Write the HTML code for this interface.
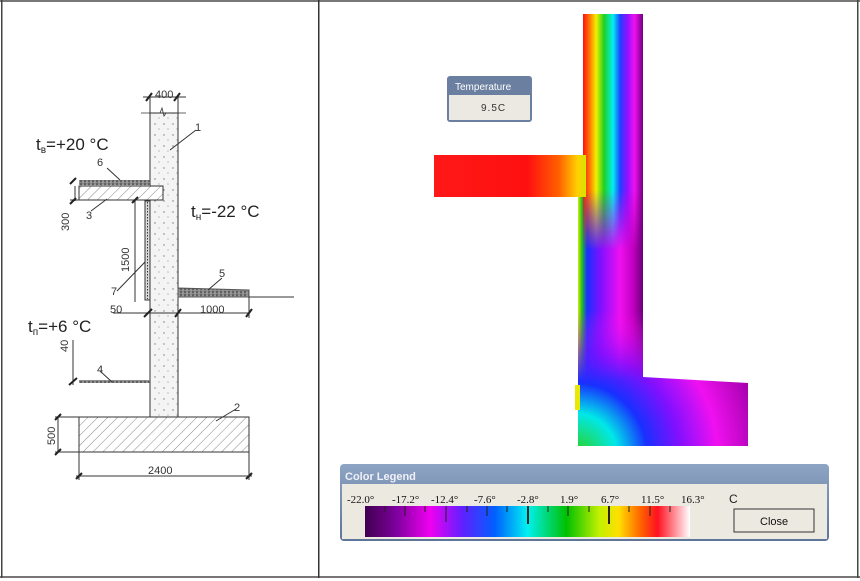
<!DOCTYPE html>
<html><head><meta charset="utf-8"><style>
html,body{margin:0;padding:0;background:#fff;}
body{width:860px;height:581px;position:relative;overflow:hidden;font-family:"Liberation Sans",sans-serif;}
</style></head><body>
<svg width="860" height="581" viewBox="0 0 860 581" xmlns="http://www.w3.org/2000/svg" style="position:absolute;left:0;top:0">
<defs>
<pattern id="hatch" width="7" height="7" patternUnits="userSpaceOnUse" patternTransform="rotate(45)">
<rect width="7" height="7" fill="#fff"/><line x1="0" y1="0" x2="0" y2="7" stroke="#888" stroke-width="1"/></pattern>
<pattern id="dots" width="9" height="11" patternUnits="userSpaceOnUse">
<rect width="9" height="11" fill="#f4f4f4"/><circle cx="2" cy="3" r="0.7" fill="#777"/><circle cx="6" cy="8" r="0.6" fill="#999"/></pattern>
<pattern id="grit" width="4" height="3" patternUnits="userSpaceOnUse">
<rect width="4" height="3" fill="#888"/><circle cx="1" cy="1" r="0.8" fill="#333"/><circle cx="3" cy="2" r="0.6" fill="#bbb"/></pattern>
<linearGradient id="gUp" x1="583" x2="643" y1="0" y2="0" gradientUnits="userSpaceOnUse">
<stop offset="0" stop-color="#ff1010"/><stop offset=".12" stop-color="#ff8000"/><stop offset=".22" stop-color="#f0f000"/><stop offset=".35" stop-color="#20d020"/><stop offset=".5" stop-color="#00f0f0"/><stop offset=".62" stop-color="#2040ff"/><stop offset=".74" stop-color="#9010ff"/><stop offset=".86" stop-color="#f010f0"/><stop offset="1" stop-color="#700080"/></linearGradient>
<linearGradient id="gLow" x1="578" x2="643" y1="0" y2="0" gradientUnits="userSpaceOnUse">
<stop offset="0" stop-color="#d0f000"/><stop offset=".06" stop-color="#20c020"/><stop offset=".14" stop-color="#1830ff"/><stop offset=".35" stop-color="#8010ff"/><stop offset=".65" stop-color="#f010f0"/><stop offset=".85" stop-color="#c000c0"/><stop offset="1" stop-color="#6a0078"/></linearGradient>
<linearGradient id="gSlab" x1="434" x2="590" y1="0" y2="0" gradientUnits="userSpaceOnUse">
<stop offset="0" stop-color="#ff1818"/><stop offset=".6" stop-color="#ff1010"/><stop offset=".8" stop-color="#ff6000"/><stop offset=".92" stop-color="#ffd000"/><stop offset="1" stop-color="#c0f000"/></linearGradient>
<linearGradient id="fadeDown" x1="0" x2="0" y1="190" y2="250" gradientUnits="userSpaceOnUse">
<stop offset="0" stop-color="#fff"/><stop offset="1" stop-color="#000"/></linearGradient>
<mask id="mUp"><rect x="570" y="0" width="90" height="260" fill="url(#fadeDown)"/><rect x="570" y="0" width="90" height="190" fill="#fff"/></mask>
<linearGradient id="fadeUp" x1="0" x2="0" y1="310" y2="380" gradientUnits="userSpaceOnUse">
<stop offset="0" stop-color="#000"/><stop offset="1" stop-color="#fff"/></linearGradient>
<mask id="mFoot"><rect x="570" y="300" width="200" height="160" fill="url(#fadeUp)"/><rect x="643" y="370" width="120" height="90" fill="#fff"/></mask>
<clipPath id="cFoot"><path d="M578 300 L643 300 L643 377 L748 383 L748 446 L578 446 Z"/></clipPath>
<radialGradient id="gFoot" cx="575" cy="455" r="190" gradientUnits="userSpaceOnUse">
<stop offset="0" stop-color="#30d010"/><stop offset=".22" stop-color="#00e8e8"/><stop offset=".38" stop-color="#1830ff"/><stop offset=".55" stop-color="#8010ff"/><stop offset=".75" stop-color="#f010f0"/><stop offset="1" stop-color="#a000a8"/></radialGradient>
<linearGradient id="gLeg" x1="365" x2="690" y1="0" y2="0" gradientUnits="userSpaceOnUse">
<stop offset="0" stop-color="#400050"/><stop offset=".1" stop-color="#8000a0"/><stop offset=".2" stop-color="#f000f0"/><stop offset=".3" stop-color="#6020ff"/><stop offset=".4" stop-color="#0060ff"/><stop offset=".5" stop-color="#00f0f0"/><stop offset=".62" stop-color="#00c000"/><stop offset=".72" stop-color="#c0f000"/><stop offset=".78" stop-color="#ffe000"/><stop offset=".85" stop-color="#ff6000"/><stop offset=".9" stop-color="#ff1020"/><stop offset="1" stop-color="#fff"/></linearGradient>
<linearGradient id="gTitle" x1="0" x2="0" y1="0" y2="1">
<stop offset="0" stop-color="#8ea4c4"/><stop offset="1" stop-color="#5e7598"/></linearGradient>
</defs>

<rect x="0" y="0" width="860" height="2" fill="#777"/>
<rect x="0" y="576" width="860" height="2" fill="#777"/>
<rect x="1" y="0" width="1.5" height="578" fill="#444"/>
<rect x="857" y="0" width="1.5" height="578" fill="#444"/>
<rect x="318" y="0" width="1.5" height="578" fill="#333"/>

<g stroke="#333" stroke-width="1" fill="none">
<rect x="79" y="417" width="170" height="35" fill="url(#hatch)"/>
<rect x="150" y="113" width="28" height="304" fill="url(#dots)"/>
<polyline points="141,113 160,113 162,108 164,116 166,113 186,113" stroke-width="0.8"/>
<rect x="79" y="186" width="84" height="14" fill="url(#hatch)"/>
<rect x="79" y="180" width="71" height="6" fill="url(#grit)" stroke="none"/>
<rect x="145" y="201" width="5" height="99" fill="#ddd"/>
<line x1="147.5" y1="202" x2="147.5" y2="299" stroke-dasharray="1.5,1.5"/>
<path d="M178 288 L249 290 L249 297 L178 297 Z" fill="url(#grit)" stroke="#555"/>
<line x1="249" y1="297" x2="294" y2="297"/>
<rect x="79" y="380" width="71" height="3" fill="url(#grit)" stroke="none"/>
<line x1="143" y1="97" x2="186" y2="97"/><line x1="150" y1="97" x2="150" y2="113"/><line x1="178" y1="97" x2="178" y2="113"/>
<line x1="75" y1="186" x2="75" y2="201"/><line x1="70" y1="200" x2="138" y2="200"/>
<line x1="135" y1="201" x2="135" y2="302"/>
<line x1="113" y1="313" x2="178" y2="313"/><line x1="178" y1="313" x2="249" y2="313"/><line x1="249" y1="297" x2="249" y2="318"/>
<line x1="73" y1="340" x2="73" y2="385"/>
<line x1="58" y1="417" x2="58" y2="452"/><line x1="55" y1="417" x2="79" y2="417"/><line x1="55" y1="452" x2="79" y2="452"/>
<line x1="76" y1="476" x2="252" y2="476"/><line x1="79" y1="452" x2="79" y2="480"/><line x1="249" y1="452" x2="249" y2="480"/>
<line x1="170" y1="150" x2="196" y2="130"/><line x1="120" y1="180" x2="107" y2="168"/><line x1="91" y1="211" x2="107" y2="199"/>
<line x1="117" y1="291" x2="145" y2="262"/><line x1="208" y1="290" x2="222" y2="278"/><line x1="112" y1="382" x2="100" y2="371"/><line x1="216" y1="421" x2="236" y2="409"/>
</g>
<g stroke="#222" stroke-width="2">
<line x1="146" y1="101" x2="152" y2="93"/><line x1="174" y1="101" x2="180" y2="93"/>
<line x1="70" y1="184" x2="76" y2="178"/><line x1="70" y1="204" x2="76" y2="198"/><line x1="132" y1="203" x2="138" y2="197"/>
<line x1="144" y1="317" x2="152" y2="309"/><line x1="175" y1="317" x2="181" y2="309"/><line x1="246" y1="317" x2="252" y2="309"/>
<line x1="69" y1="385" x2="77" y2="378"/>
<line x1="55" y1="420" x2="61" y2="414"/><line x1="55" y1="455" x2="61" y2="449"/>
<line x1="76" y1="479" x2="82" y2="473"/><line x1="246" y1="479" x2="252" y2="473"/>
</g>
<g font-size="11" fill="#333" font-family="Liberation Sans, sans-serif">
<text x="155" y="98">400</text><text x="195" y="131">1</text><text x="97" y="166">6</text><text x="86" y="219">3</text>
<text x="219" y="277">5</text><text x="111" y="295">7</text><text x="110" y="313">50</text><text x="200" y="313">1000</text>
<text x="97" y="373">4</text><text x="234" y="411">2</text><text x="148" y="474">2400</text>
<text transform="translate(69,231) rotate(-90)">300</text>
<text transform="translate(129,272) rotate(-90)">1500</text>
<text transform="translate(68,352) rotate(-90)">40</text>
<text transform="translate(55,445) rotate(-90)">500</text>
</g>
<g font-size="17" fill="#222" font-family="Liberation Sans, sans-serif">
<text x="36" y="150">t<tspan font-size="10" dy="3">в</tspan><tspan dy="-3">=+20 °C</tspan></text>
<text x="191" y="217">t<tspan font-size="10" dy="3">н</tspan><tspan dy="-3">=-22 °C</tspan></text>
<text x="28" y="332">t<tspan font-size="10" dy="3">п</tspan><tspan dy="-3">=+6 °C</tspan></text>
</g>

<!-- RIGHT THERMAL -->
<rect x="578" y="190" width="65" height="256" fill="url(#gLow)"/>
<rect x="583" y="14" width="60" height="250" fill="url(#gUp)" mask="url(#mUp)"/>
<rect x="434" y="155" width="152" height="42" fill="url(#gSlab)"/>
<g clip-path="url(#cFoot)"><rect x="578" y="300" width="170" height="146" fill="url(#gFoot)" mask="url(#mFoot)"/></g>
<rect x="575" y="385" width="5" height="25" fill="#e8e800"/>

<rect x="447" y="76" width="85" height="46" rx="3" fill="#6b7fa0"/>
<rect x="449" y="95" width="81" height="25" fill="#ece9e2"/>
<text x="455" y="90" font-size="10" fill="#fff">Temperature</text>
<text x="481" y="111" font-size="10" fill="#333" letter-spacing="1">9.5C</text>

<rect x="340" y="464" width="489" height="77" rx="4" fill="url(#gTitle)"/>
<rect x="342" y="484" width="485" height="55" fill="#ece9e0"/>
<text x="345" y="480" font-size="11" font-weight="bold" fill="#f0f0f8">Color Legend</text>
<rect x="365" y="506" width="325" height="31" fill="url(#gLeg)"/>
<g font-family="Liberation Serif, serif" font-size="11" fill="#111">
<text x="347" y="503">-22.0°</text><text x="392" y="503">-17.2°</text><text x="431" y="503">-12.4°</text><text x="474" y="503">-7.6°</text><text x="517" y="503">-2.8°</text><text x="560" y="503">1.9°</text><text x="601" y="503">6.7°</text><text x="641" y="503">11.5°</text><text x="681" y="503">16.3°</text>
</g>
<text x="729" y="503" font-size="12" fill="#222">C</text>
<g stroke="#222" stroke-width="1">
<line x1="385" y1="506" x2="385" y2="512"/><line x1="405" y1="506" x2="405" y2="516"/><line x1="425" y1="506" x2="425" y2="512"/><line x1="446" y1="506" x2="446" y2="522"/><line x1="467" y1="506" x2="467" y2="512"/><line x1="487" y1="506" x2="487" y2="516"/><line x1="507" y1="506" x2="507" y2="512"/><line x1="528" y1="506" x2="528" y2="524" stroke-width="2"/><line x1="548" y1="506" x2="548" y2="512"/><line x1="568" y1="506" x2="568" y2="516"/><line x1="589" y1="506" x2="589" y2="512"/><line x1="609" y1="506" x2="609" y2="524" stroke-width="2"/><line x1="629" y1="506" x2="629" y2="512"/><line x1="650" y1="506" x2="650" y2="516"/><line x1="670" y1="506" x2="670" y2="512"/>
</g>
<rect x="734" y="509" width="80" height="23" fill="#ece9e0" stroke="#333"/>
<text x="760" y="525" font-size="11" fill="#111">Close</text>
</svg>
</body></html>
